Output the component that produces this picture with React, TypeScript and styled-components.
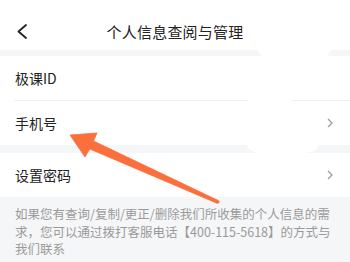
import React from "react";
import styled, { createGlobalStyle } from "styled-components";

const GlobalStyle = createGlobalStyle`
  html, body {
    margin: 0;
    padding: 0;
    background: #f5f6f8;
  }
  body {
    font-family: "Noto Sans CJK SC", "Noto Sans", sans-serif;
  }
`;

const Page = styled.div`
  position: relative;
  width: 350px;
  height: 262px;
  overflow: hidden;
  background: #f5f6f8;
`;

const Header = styled.div`
  height: 50px;
  background: #fff;
  display: flex;
  align-items: center;
  justify-content: center;
  position: relative;
`;

const BackButton = styled.div`
  position: absolute;
  left: 14px;
  top: 22px;
  width: 18px;
  height: 20px;
  display: flex;
`;

const Title = styled.div`
  font-size: 15px;
  color: #222;
  margin-top: 13px;
  letter-spacing: 0.2px;
`;

const Group = styled.div<{ $gap: number }>`
  margin-top: ${(p) => p.$gap}px;
  background: #fff;
`;

const Row = styled.div<{ $divider?: boolean }>`
  position: relative;
  height: 44px;
  display: flex;
  align-items: center;
  justify-content: space-between;
  padding: 0 17px 0 15px;
  font-size: 14px;
  color: #222;

  &::after {
    content: "";
    display: ${(p) => (p.$divider ? "block" : "none")};
    position: absolute;
    left: 14px;
    right: 0;
    bottom: -1px;
    height: 1px;
    background: #eff0f2;
  }
`;

const Divided = styled.div`
  height: 1px;
`;

const Chevron = () => (
  <svg width="6" height="10" viewBox="0 0 6 10">
    <path d="M1 1 L5 5 L1 9" fill="none" stroke="#9a9a9a" strokeWidth="1.2" />
  </svg>
);

const Note = styled.div`
  padding: 8px 15px 0 15px;
  font-size: 12.5px;
  line-height: 17.5px;
  color: #9a9a9a;
`;

const Overlay = styled.svg`
  position: absolute;
  left: 0;
  top: 0;
  pointer-events: none;
`;

export default function App() {
  return (
    <Page>
      <GlobalStyle />
      <Header>
        <BackButton>
          <svg width="18" height="20" viewBox="0 0 18 20">
            <path d="M12 3 L4.5 9.5 L12 16" fill="none" stroke="#222" strokeWidth="1.8" strokeLinejoin="round" strokeLinecap="round" />
          </svg>
        </BackButton>
        <Title>个人信息查阅与管理</Title>
      </Header>
      <Group $gap={6}>
        <Row $divider>极课ID</Row>
        <Divided />
        <Row>
          手机号
          <Chevron />
        </Row>
      </Group>
      <Group $gap={8}>
        <Row>
          设置密码
          <Chevron />
        </Row>
      </Group>
      <Note>
        如果您有查询/复制/更正/删除我们所收集的个人信息的需求，您可以通过拨打客服电话【400-115-5618】的方式与我们联系
      </Note>
      <Overlay width="350" height="262" viewBox="0 0 350 262">
        <path d="M257 49 L332 49 L326 57 L262 57 Z" fill="#fff" />
        <rect x="248" y="99" width="44" height="3" fill="#fff" />
        <path d="M247 143 L320 143 L318 148 Q314 153 300 153 L262 153 Q250 153 247 146 Z" fill="#fff" />
        <path
          d="M70 135 L97 133 L93.5 141 L218.8 200.8 Q220 203 217.4 203.4 L89.8 149 L85 157 Z"
          fill="#fb6f3c"
          stroke="#fb6f3c"
          strokeWidth="0.8"
          strokeLinejoin="round"
        />
      </Overlay>
    </Page>
  );
}
